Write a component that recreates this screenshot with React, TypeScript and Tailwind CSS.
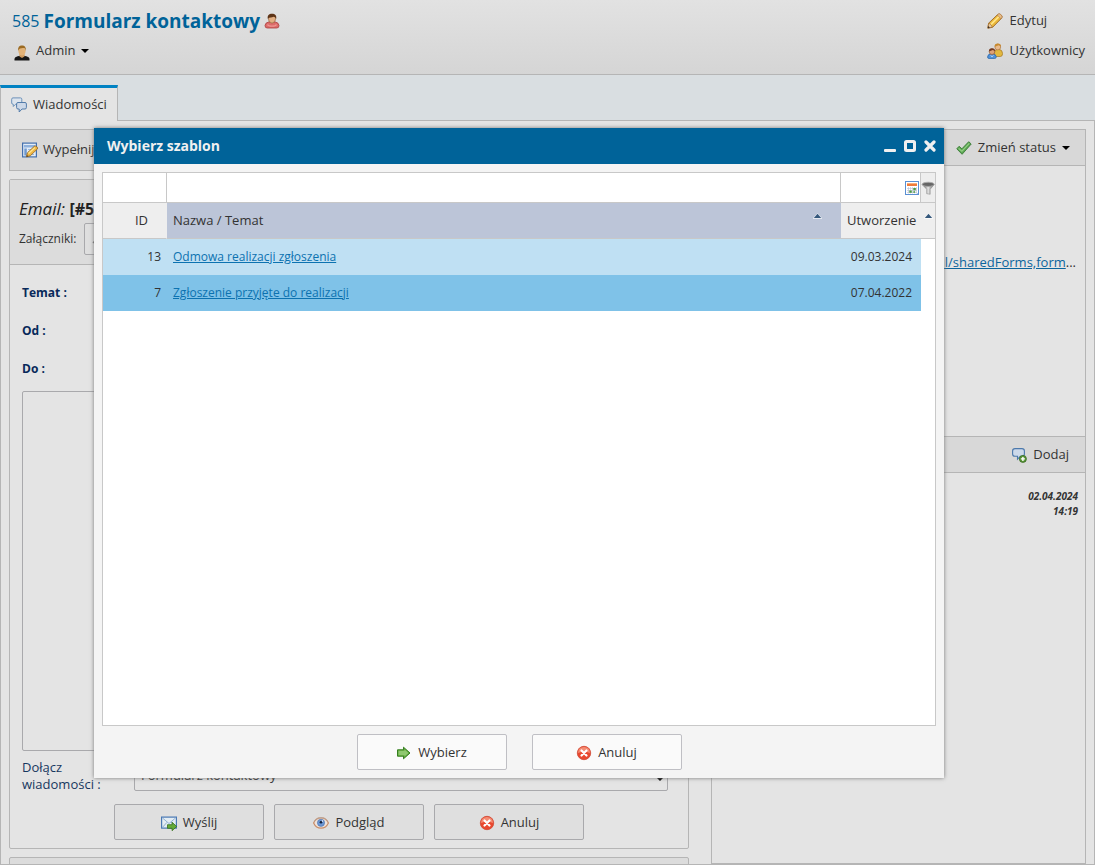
import React from "react";

type IconProps = { className?: string };

const svgBase = (className?: string) => ({
  viewBox: "0 0 16 16",
  className: `size-4 shrink-0 ${className ?? ""}`,
  "aria-hidden": true,
});

function RedUserIcon({ className }: IconProps) {
  return (
    <svg {...svgBase(className)}>
      <path d="M1 12.500Q1.200 9.800 4.500 9h7q3.300.8 3.500 3.500 0 2.500-2.200 2.500H3.200Q1 15 1 12.500z" fill="#dc6b69" stroke="#a93f3d" strokeWidth=".8" />
      <path d="M3.500 11.500c1 2.200 8 2.200 9 0" fill="none" stroke="#ee9491" strokeWidth="1.200" />
      <path d="M4.300 5Q4.300 1.600 8 1.600T11.700 5Q11.800 9.600 8 10.200 4.200 9.600 4.300 5z" fill="#e3b083" stroke="#8a5a35" strokeWidth=".6" />
      <path d="M3.800 5.800C3.200 2.500 5 .8 8 .8s4.800 1.700 4.200 5c-.8-1.300-1.700-1.900-2.700-2-1.500.8-4 .3-5.700 2z" fill="#5d3417" />
    </svg>
  );
}

function AdminIcon({ className }: IconProps) {
  return (
    <svg {...svgBase(className)}>
      <path d="M.5 15.500v-1.300c0-2.200 3-3.400 7.500-3.400s7.500 1.200 7.500 3.400v1.300z" fill="#161616" />
      <path d="M5.500 9h5v2.500L8 13l-2.500-1.500z" fill="#cf9a5d" />
      <ellipse cx="8" cy="6" rx="3.600" ry="4.600" fill="#e2b277" />
      <path d="M4.200 6C3.700 2.300 5.300.5 8 .5s4.300 1.800 3.800 5.500c-.4-1.800-.8-2.600-1.600-2.900-1.500-.4-3.200 0-4.200.4C5 4 4.500 4.900 4.200 6z" fill="#9b6a22" />
    </svg>
  );
}

function ChatsIcon({ className }: IconProps) {
  return (
    <svg {...svgBase(className)}>
      <path d="M2 .9h7.500q1.300 0 1.300 1.300V6q0 1.300-1.300 1.300H4.500L2.300 9.500V7.300Q.7 7.300.7 6V2.200Q.7.900 2 .9z" fill="#dce4ed" stroke="#6d92ba" />
      <path d="M7 5.500h7q1.400 0 1.400 1.400v3.700q0 1.400-1.400 1.400h-3l-2.800 3v-3H7q-1.400 0-1.400-1.400V6.900Q5.600 5.500 7 5.500z" fill="#ccd8e8" stroke="#537caa" />
    </svg>
  );
}

function FormIcon({ className }: IconProps) {
  return (
    <svg {...svgBase(className)}>
      <rect x=".6" y="1.100" width="13.800" height="13.800" fill="#e4edf7" stroke="#4470ad" strokeWidth="1.200" />
      <path d="M2 3h11v2.500H2z" fill="#8fb1dc" />
      <path d="M2.300 6.500h2.500v7H2.300z" fill="#6f98cf" />
      <path d="M6 7.500h7M6 10h5M6 12.500h6" fill="none" stroke="#9bb8db" />
      <path d="M4.500 14.800l.8-3.900 7-6.600q1-.9 2.500.4 1.500 1.400.4 2.500L8.300 13.800z" fill="#efb744" stroke="#8e611e" strokeWidth=".8" />
      <path d="M6.500 11.500l6.500-6" stroke="#ffe58f" strokeWidth="1.200" />
      <path d="M4.500 14.800l.4-1.800 1.400 1.300z" fill="#49351e" />
    </svg>
  );
}

function PencilIcon({ className }: IconProps) {
  return (
    <svg {...svgBase(className)}>
      <path d="M.8 15.200l.8-5L10.800 1.400q1.300-1.100 3.100.4 1.900 1.700.8 3.300L5.600 14.300z" fill="#e9b638" stroke="#9a6426" strokeWidth=".9" />
      <path d="M3.200 10.900l8.500-8.300 1.300 1.200-8.600 8.500z" fill="#ffe486" />
      <path d="M1 15l.7-4.800q2.300.5 3.700 3.900z" fill="#e7c9a0" stroke="#9a6426" strokeWidth=".6" />
      <path d="M.8 15.200l.4-2.100L3 14.500z" fill="#382c24" />
      <path d="M10.300 2l3.600 3.700 1-1.200q.6-1.500-.9-2.900-1.500-1.200-2.700-.5z" fill="#e7bd8d" stroke="#ab763b" strokeWidth=".6" />
    </svg>
  );
}

function UsersIcon({ className }: IconProps) {
  return (
    <svg {...svgBase(className)}>
      <path d="M6.800 11V9.300Q8 6.300 11.500 6.300q4 .2 4.100 4.300 0 2.900-2.300 2.900H8z" fill="#e2b83f" stroke="#a37725" strokeWidth=".7" />
      <circle cx="10.800" cy="4" r="2.900" fill="#e9ba8b" stroke="#a46a34" strokeWidth=".6" />
      <path d="M7.600 3.800Q7.500.5 10.800.5T14 3.800Q12.900 2.400 11.500 2.300 10.200 3 7.600 3.800z" fill="#c78a2f" />
      <path d="M.5 14Q.7 10.800 4.800 10.600q4.200.2 4.500 3.200 0 1.700-1.600 1.700H2Q.6 15.500.5 14z" fill="#4f91d8" stroke="#2864a6" strokeWidth=".7" />
      <circle cx="5" cy="8.700" r="2.800" fill="#dda278" stroke="#8a512c" strokeWidth=".6" />
      <path d="M1.900 8.600Q1.800 5.200 5 5.200t3.200 3.400Q7 7.200 5.800 7.100 4 7.900 1.900 8.600z" fill="#74391f" />
      <path d="M3.800 12.500l1.200 1.300 1.300-1.300" fill="none" stroke="#cce3fb" />
    </svg>
  );
}

function CheckIcon({ className }: IconProps) {
  return (
    <svg {...svgBase(className)}>
      <path d="M.8 8.800l2.300-2.500 2.800 2.500L12.700 1.700 15.200 4 6.100 14.300z" fill="#5ba653" stroke="#397a36" strokeWidth=".9" strokeLinejoin="round" />
      <path d="M2.600 8.300L5.900 11.200 13.300 3.300" fill="none" stroke="#95cf85" strokeWidth="1.100" />
    </svg>
  );
}

function CalendarIcon({ className }: IconProps) {
  return (
    <svg {...svgBase(className)}>
      <rect x="1.500" y="1.500" width="13" height="13" fill="#fff" stroke="#5a8fd3" />
      <path d="M3 3h10v3H3z" fill="#ef7a3a" />
      <path d="M3 3h10v1H3z" fill="#f7ae7a" />
      <path d="M3 8.500h10M3 10.500h10M3 12.500h10M4.500 7v6.500M6.500 7v6.500M8.500 7v6.500M10.500 7v6.500M12.500 7v6.500" stroke="#b7bed1" strokeWidth=".6" />
      <path d="M9.300 8h2.500v2.200H9.300zM5.300 10.500h2.500v2.200H5.300zM9.300 11.300h1.800v1.500H9.300z" fill="#4b9a43" />
      <path d="M15 12v3h-3z" fill="#5a8fd3" />
    </svg>
  );
}

function FunnelIcon({ className }: IconProps) {
  return (
    <svg viewBox="0 0 16 16" className={`size-3.5 ${className ?? ""}`} aria-hidden>
      <defs>
        <linearGradient id="funnel" x1="0" x2="1">
          <stop offset="0" stopColor="#444" />
          <stop offset=".5" stopColor="#e6e6e6" />
          <stop offset="1" stopColor="#555" />
        </linearGradient>
      </defs>
      <path d="M1.300 4L6.500 9.500v5l4 .7V9.500L15 4z" fill="url(#funnel)" stroke="#777" strokeWidth=".5" />
      <ellipse cx="8.200" cy="3.800" rx="6.900" ry="2.400" fill="#666" stroke="#aaa" strokeWidth="1" />
    </svg>
  );
}

function CommentAddIcon({ className }: IconProps) {
  return (
    <svg {...svgBase(className)}>
      <path d="M4 1.600h7q2.400 0 2.400 2.300v3q0 2.300-2.400 2.300H9.500L6.500 12.200V9.200H4Q1.600 9.200 1.600 6.900v-3Q1.600 1.600 4 1.600z" fill="#ccd9ea" stroke="#4c79ac" strokeWidth="1.100" />
      <circle cx="11.900" cy="11.900" r="3.500" fill="#5d973b" stroke="#356b20" strokeWidth=".8" />
      <path d="M11.900 9.900v4M9.900 11.900h4" stroke="#fff" strokeWidth="1.400" />
    </svg>
  );
}

function SendIcon({ className }: IconProps) {
  return (
    <svg {...svgBase(className)}>
      <rect x=".6" y="2.100" width="14.800" height="11" fill="#e4edf3" stroke="#4978b4" strokeWidth="1.200" />
      <path d="M1.500 3l6.500 5.500L14.500 3M1.500 12.300l4.500-5M14.500 12.300L10 7" fill="none" stroke="#86a8cf" strokeWidth=".9" />
      <path d="M6.500 9.700h4.600V7.300l4.600 4.200-4.600 4.200v-2.400H6.500z" fill="#65ab39" stroke="#356f1b" strokeWidth=".8" />
    </svg>
  );
}

function EyeIcon({ className }: IconProps) {
  return (
    <svg {...svgBase(className)}>
      <path d="M.6 8Q2.500 2.800 8 2.800T15.400 8Q13 13.200 8 13.200T.6 8z" fill="#eee3dc" stroke="#c98d68" strokeWidth="1.200" />
      <path d="M1 6.300Q4 2.500 8 2.500t7 3.800" fill="none" stroke="#b5a69c" strokeWidth=".8" />
      <circle cx="8" cy="7.800" r="3.600" fill="#6b96d4" stroke="#4971aa" strokeWidth=".6" />
      <circle cx="8" cy="7.200" r="1.300" fill="#11203d" />
      <circle cx="9.500" cy="6" r=".7" fill="#fff" />
    </svg>
  );
}

function CancelIcon({ className }: IconProps) {
  return (
    <svg {...svgBase(className)}>
      <circle cx="8" cy="8" r="6.700" fill="#e9482f" stroke="#cf4935" strokeWidth=".8" />
      <path d="M2 8Q2.300 2 8 2t6 6Q8 5.500 2 8z" fill="#f58c74" />
      <path d="M5.500 5.500l5 5M10.500 5.500l-5 5" stroke="#fff" strokeWidth="2.200" strokeLinecap="round" />
    </svg>
  );
}

function ArrowIcon({ className }: IconProps) {
  return (
    <svg {...svgBase(className)}>
      <path d="M1.500 4.800h6V2.200L14 8l-6.500 5.800v-2.600h-6z" fill="#5da43a" stroke="#347f1e" strokeLinejoin="round" />
      <path d="M2.500 5.800h6V4.500L12.500 8l-4 3.500v-1.300h-6z" fill="#8fc870" />
    </svg>
  );
}

function PaperclipIcon({ className }: IconProps) {
  return (
    <svg {...svgBase(className)}>
      <path d="M2 12l7-8q2-2 4 0t0 4l-6 6" fill="none" stroke="#777" strokeWidth="1.200" />
    </svg>
  );
}

function Caret() {
  return (
    <svg viewBox="0 0 8 4" className="h-1 w-2 shrink-0" aria-hidden>
      <path d="M0 0h8L4 4z" fill="#000" />
    </svg>
  );
}

function SortMark() {
  return (
    <svg viewBox="0 0 9 6" className="h-1.5 w-[9px]" aria-hidden>
      <path d="M0 6V5L4.500 0 9 5v1z" fill="#fff" opacity=".6" />
      <path d="M.8 5L4.500.8 8.200 5z" fill="#35587c" />
    </svg>
  );
}

function FormButton({ icon, children }: { icon: React.ReactNode; children: React.ReactNode }) {
  return (
    <button type="button" className="flex h-9 w-[150px] items-center justify-center gap-1.5 rounded-xs border border-[#a9a9ac] bg-[#dfdfdf] pt-0.5">
      {icon}
      {children}
    </button>
  );
}

function DialogButton({ icon, children }: { icon: React.ReactNode; children: React.ReactNode }) {
  return (
    <button type="button" className="flex h-9 w-[150px] items-center justify-center gap-1.5 rounded-xs border border-[#bfbfc4] bg-[#fafafa] pt-0.5">
      {icon}
      {children}
    </button>
  );
}

function Header() {
  return (
    <header className="flex h-[75px] shrink-0 justify-between border-b border-[#b5b5b5] bg-linear-to-b from-[#e2e2e2] to-[#d5d5d5] pr-2.5 pl-3">
      <div className="flex flex-col pt-[7px]">
        <h1 className="flex h-7 items-center gap-1 text-[#006399]">
          <span className="text-base">585</span>
          <span className="text-[19px] font-bold">Formularz kontaktowy</span>
          <RedUserIcon />
        </h1>
        <button type="button" className="mt-1 flex h-6 items-center gap-1.5 self-start pl-0.5">
          <AdminIcon className="mt-1" />
          Admin
          <Caret />
        </button>
      </div>
      <nav className="flex flex-col pt-2">
        <a href="#edytuj" className="flex h-[25px] items-center gap-[7px]">
          <PencilIcon />
          Edytuj
        </a>
        <a href="#uzytkownicy" className="mt-[5px] flex h-[25px] items-center gap-[7px]">
          <UsersIcon />
          Użytkownicy
        </a>
      </nav>
    </header>
  );
}

function MessageForm() {
  return (
    <section className="mt-2 shrink-0 rounded-xs border border-[#b5b5b5]">
      <div className="h-[85px] border-b border-[#b5b5b5] bg-[#dcdcdc] px-[9px] pt-[15px]">
        <h2 className="h-7 text-[17px] leading-7 text-[#222]">
          <i>Email:</i> <b className="text-base">[#585]</b>
        </h2>
        <div className="flex items-center gap-2 text-xs">
          <span>Załączniki:</span>
          <button type="button" aria-label="Dodaj załącznik" className="flex h-8 w-24 items-center rounded-xs border border-[#a9a9ac] bg-[#dfdfdf] pl-1.5">
            <PaperclipIcon />
          </button>
        </div>
      </div>
      <div className="px-3 pt-[9px] pb-2">
        <dl className="text-xs font-bold text-[#08295a]">
          <dt className="flex h-[38px] items-center">Temat :</dt>
          <dt className="flex h-[38px] items-center">Od :</dt>
          <dt className="flex h-[38px] items-center">Do :</dt>
        </dl>
        <textarea aria-label="Treść wiadomości" className="mt-[3px] block h-[360px] w-full resize-none rounded-xs border border-[#a9a9ac] bg-[#e4e4e4]" />
        <div className="mt-1 flex h-9 items-center">
          <label htmlFor="attach" className="mt-1.5 w-28 shrink-0 pr-4 leading-[17px] text-[#17375f]">
            Dołącz wiadomości :
          </label>
          <div className="relative mr-2 flex-1">
            <select id="attach" className="h-9 w-full appearance-none rounded-xs border border-[#a9a9ac] bg-[#e4e4e4] px-1.5 pt-1.5">
              <option>Formularz kontaktowy</option>
            </select>
            <span className="pointer-events-none absolute right-1 bottom-2.5">
              <Caret />
            </span>
          </div>
        </div>
        <div className="mt-[13px] flex justify-center gap-2.5">
          <FormButton icon={<SendIcon />}>Wyślij</FormButton>
          <FormButton icon={<EyeIcon />}>Podgląd</FormButton>
          <FormButton icon={<CancelIcon />}>Anuluj</FormButton>
        </div>
      </div>
    </section>
  );
}

function SidePanel() {
  return (
    <aside className="flex min-w-0 flex-col border border-[#b5b5b5]">
      <div className="flex h-9 shrink-0 items-center justify-end border-b border-[#b5b5b5] bg-[#d8d8d8] pr-[15px]">
        <button type="button" className="flex items-center gap-1.5">
          <CheckIcon />
          Zmień status
          <Caret />
        </button>
      </div>
      <div className="flex h-[271px] shrink-0 items-start justify-end border-b border-[#b5b5b5] pt-[87px] pr-[9px]">
        <p>
          <a href="#formularz" className="text-[#0c659d] underline">portal/sharedForms,form</a>...
        </p>
      </div>
      <div className="flex h-9 shrink-0 items-center justify-end border-b border-[#b5b5b5] bg-[#d8d8d8] pr-4">
        <button type="button" className="flex items-center gap-1.5">
          <CommentAddIcon />
          Dodaj
        </button>
      </div>
      <p className="pt-4 pr-[7px] text-right text-[10px] leading-[15px] font-bold italic">
        02.04.2024
        <br />
        14:19
      </p>
    </aside>
  );
}

const templates = [
  { id: 13, name: "Odmowa realizacji zgłoszenia", created: "09.03.2024", row: "bg-[#bfe0f3]" },
  { id: 7, name: "Zgłoszenie przyjęte do realizacji", created: "07.04.2022", row: "bg-[#7fc2e8]" },
];

function TemplateTable() {
  return (
    <div className="min-h-0 flex-1 border border-[#c8c8c8] bg-white">
      <table className="w-full table-fixed border-separate border-spacing-0 text-xs">
        <colgroup>
          <col className="w-16" />
          <col />
          <col className="w-20" />
          <col className="w-3.5" />
        </colgroup>
        <thead>
          <tr className="h-[30px]">
            <td className="border-r border-b border-[#c8c8c8] p-0">
              <input aria-label="Filtr ID" className="block h-7 w-full px-1.5" />
            </td>
            <td className="border-r border-b border-[#c8c8c8] p-0">
              <input aria-label="Filtr nazwy" className="block h-7 w-full px-1.5" />
            </td>
            <td className="border-r border-b border-[#c8c8c8] p-0">
              <button type="button" aria-label="Wybierz datę" className="ml-auto block">
                <CalendarIcon />
              </button>
            </td>
            <td className="border-b border-[#c8c8c8] bg-[#eee] p-0">
              <button type="button" aria-label="Filtruj" className="block">
                <FunnelIcon />
              </button>
            </td>
          </tr>
          <tr className="h-9 text-[13px]">
            <th className="border-r border-b border-r-[#eee] border-b-[#c8c8c8] bg-[#eee] p-0 pr-[18px] text-right font-normal">ID</th>
            <th className="border-b border-[#c8c8c8] bg-[#bcc5d8] px-1.5 py-0 text-left font-normal">
              <span className="flex items-center justify-between pr-[13px]">
                Nazwa / Temat
                <span className="pb-2">
                  <SortMark />
                </span>
              </span>
            </th>
            <th colSpan={2} className="border-b border-[#c8c8c8] bg-[#eee] px-0.5 py-0 pl-1.5 text-left font-normal">
              <span className="flex items-center justify-between">
                Utworzenie
                <span className="pb-2">
                  <SortMark />
                </span>
              </span>
            </th>
          </tr>
        </thead>
        <tbody>
          {templates.map((t) => (
            <tr key={t.id} className="h-9">
              <td className={`${t.row} p-0 pr-1.5 text-right`}>{t.id}</td>
              <td className={`${t.row} px-1.5 py-0`}>
                <a href={`#szablon-${t.id}`} className="text-[#0c72b0] underline">{t.name}</a>
              </td>
              <td className={`${t.row} p-0 pr-[9px] text-right`}>{t.created}</td>
              <td className="p-0" />
            </tr>
          ))}
        </tbody>
      </table>
    </div>
  );
}

function TemplateDialog() {
  return (
    <div role="dialog" aria-labelledby="dialog-title" className="absolute top-32 left-[94px] flex h-[650px] w-[850px] flex-col bg-[#f4f4f4] shadow-[0_0_4px_#777]">
      <div className="flex h-9 shrink-0 items-center justify-between bg-[#006399] pr-2 pl-[13px]">
        <h2 id="dialog-title" className="text-sm font-bold text-[#f0f0f0]">Wybierz szablon</h2>
        <div className="flex gap-2">
          <button type="button" aria-label="Minimalizuj">
            <svg viewBox="0 0 12 12" className="size-3" aria-hidden>
              <rect y="9" width="12" height="3" rx="1" fill="#f0f0f0" />
            </svg>
          </button>
          <button type="button" aria-label="Maksymalizuj">
            <svg viewBox="0 0 12 12" className="size-3" aria-hidden>
              <rect x="1.500" y="1.500" width="9" height="9" rx="1" fill="none" stroke="#f0f0f0" strokeWidth="3" />
            </svg>
          </button>
          <button type="button" aria-label="Zamknij">
            <svg viewBox="0 0 12 12" className="size-3" aria-hidden>
              <path d="M2 2l8 8M10 2l-8 8" stroke="#f0f0f0" strokeWidth="3.200" strokeLinecap="round" />
            </svg>
          </button>
        </div>
      </div>
      <div className="flex min-h-0 flex-1 flex-col p-2">
        <TemplateTable />
        <div className="mt-2 flex shrink-0 justify-center gap-[25px]">
          <DialogButton icon={<ArrowIcon />}>Wybierz</DialogButton>
          <DialogButton icon={<CancelIcon />}>Anuluj</DialogButton>
        </div>
      </div>
    </div>
  );
}

export default function App() {
  return (
    <div className="relative flex h-screen flex-col overflow-hidden bg-[#d9dee1] font-['Open_Sans','Noto_Sans',sans-serif] text-[13px] text-[#333]">
      <Header />
      <div className="flex shrink-0 pt-2.5" role="tablist">
        <button type="button" role="tab" aria-selected="true" className="z-1 -mb-px flex h-9 items-center gap-1.5 border-t-3 border-r border-l border-t-[#0082c3] border-r-[#b5b5b5] border-l-[#b5b5b5] bg-[#e4e4e4] px-2.5">
          <ChatsIcon />
          Wiadomości
        </button>
      </div>
      <main className="grid min-h-0 flex-1 grid-cols-[680fr_375fr] grid-rows-[minmax(0,1fr)] gap-[22px] overflow-hidden border border-[#b5b5b5] bg-[#e4e4e4] px-2 pt-2">
        <div className="flex min-w-0 flex-col">
          <div className="flex h-[42px] shrink-0 items-center border border-[#b5b5b5] bg-[#d8d8d8] px-3">
            <button type="button" className="flex items-center gap-[5px]">
              <FormIcon />
              Wypełnij
            </button>
          </div>
          <MessageForm />
          <section className="mt-2 h-20 shrink-0 rounded-xs border border-[#b5b5b5] bg-[#dcdcdc]" />
        </div>
        <SidePanel />
      </main>
      <TemplateDialog />
    </div>
  );
}
